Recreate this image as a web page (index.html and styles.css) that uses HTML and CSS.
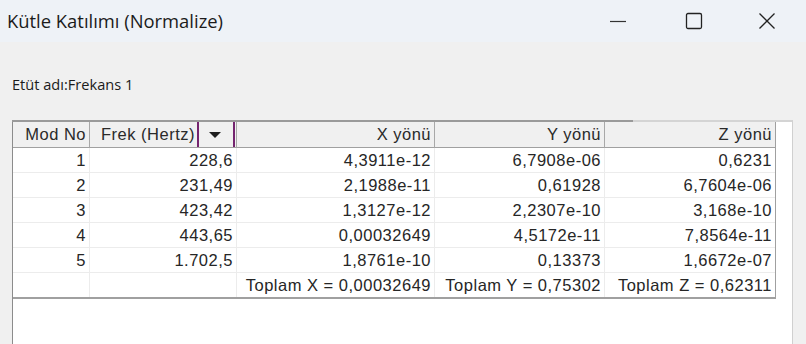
FILE: index.html
```html
<!DOCTYPE html>
<html lang="tr">
<head>
    <meta charset="UTF-8">
    <title>Kütle Katılımı (Normalize)</title>
    <link rel="stylesheet" href="styles.css">
</head>
<body>
    <div class="titlebar">
        <span class="title">Kütle Katılımı (Normalize)</span>
        <div class="controls">
            <span class="ctl">
                <svg width="18" height="18" viewBox="0 0 18 18"><path d="M1 9.5h16" stroke="#333" stroke-width="1.2" fill="none"/></svg>
            </span>
            <span class="ctl">
                <svg width="18" height="18" viewBox="0 0 18 18"><rect x="1.5" y="1.5" width="15" height="15" rx="1.5" stroke="#222" stroke-width="1.3" fill="none"/></svg>
            </span>
            <span class="ctl">
                <svg width="18" height="18" viewBox="0 0 18 18"><path d="M1.5 1.5l15 15M16.5 1.5l-15 15" stroke="#222" stroke-width="1.3" fill="none"/></svg>
            </span>
        </div>
    </div>

    <div class="info">Etüt adı:Frekans 1</div>

    <div class="panel">
        <div class="grid">
            <div class="hd">Mod No</div>
            <div class="hd hd-frek">
                <span>Frek (Hertz)</span>
                <span class="drop"><span class="tri"></span></span>
            </div>
            <div class="hd">X yönü</div>
            <div class="hd">Y yönü</div>
            <div class="hd">Z yönü</div>

            <div class="c">1</div><div class="c">228,6</div><div class="c">4,3911e-12</div><div class="c">6,7908e-06</div><div class="c">0,6231</div>
            <div class="c">2</div><div class="c">231,49</div><div class="c">2,1988e-11</div><div class="c">0,61928</div><div class="c">6,7604e-06</div>
            <div class="c">3</div><div class="c">423,42</div><div class="c">1,3127e-12</div><div class="c">2,2307e-10</div><div class="c">3,168e-10</div>
            <div class="c">4</div><div class="c">443,65</div><div class="c">0,00032649</div><div class="c">4,5172e-11</div><div class="c">7,8564e-11</div>
            <div class="c">5</div><div class="c">1.702,5</div><div class="c">1,8761e-10</div><div class="c">0,13373</div><div class="c">1,6672e-07</div>
            <div class="c"></div><div class="c"></div><div class="c">Toplam X = 0,00032649</div><div class="c">Toplam Y = 0,75302</div><div class="c">Toplam Z = 0,62311</div>
        </div>
    </div>
</body>
</html>
```

FILE: styles.css
```css
body {
    margin: 0;
    background: #f0f0f0;
    font-family: "Open Sans", sans-serif;
    color: #1b1b1b;
    height: 344px;
    overflow: hidden;
}
.titlebar {
    height: 42px;
    background: #eef2f7;
    display: flex;
    align-items: center;
    justify-content: space-between;
}
.title {
    padding-left: 7px;
    font-size: 18.4px;
    margin-top: -1px;
}
.controls {
    display: flex;
    align-items: center;
}
.ctl {
    width: 76px;
    height: 42px;
    display: flex;
    align-items: center;
    justify-content: center;
}
.ctl:last-child {
    width: 70px;
    margin-right: 4px;
}
.info {
    padding: 32px 0 0 12px;
    line-height: 20px;
    font-size: 14.6px;
}
.panel {
    position: relative;
    margin: 26px 0 0 12px;
    width: 779px;
    height: 222px;
    background: #ffffff;
    border-left: 1px solid #8c8c8c;
    border-right: 1px solid #d0d0d0;
    border-top: 2px solid #d4d4d4;
}
.panel::before {
    content: "";
    position: absolute;
    left: -1px;
    top: -2px;
    width: 621px;
    height: 2px;
    background: #9a9a9a;
}
.grid {
    display: grid;
    grid-template-columns: 77px 147px 198px 170px 170px;
    width: 762px;
    border-right: 1px solid #a0a0a0;
    border-bottom: 2px solid #a0a0a0;
    font-family: "Liberation Sans", Arial, sans-serif;
    font-size: 16.5px;
    letter-spacing: 0.5px;
}
.hd, .c {
    box-sizing: border-box;
    display: flex;
    align-items: center;
    justify-content: flex-end;
    padding-right: 3px;
    white-space: nowrap;
}
.hd {
    height: 26px;
    background: #f0f0f0;
    border-right: 1px solid #a8a8a8;
    border-bottom: 1px solid #a0a0a0;
    color: #2a2a2a;
}
.hd:nth-child(5) {
    border-right: none;
}
.c {
    height: 25px;
    border-right: 1px solid #ececec;
    border-bottom: 1px solid #ececec;
    color: #262626;
}
.c:nth-child(5n) {
    border-right: none;
}
.c:nth-last-child(-n+5) {
    border-bottom: none;
    height: 24px;
}
.hd-frek {
    padding-right: 1px;
    gap: 2px;
}
.drop {
    box-sizing: border-box;
    width: 38px;
    height: 100%;
    border-left: 2px solid #74246f;
    border-right: 2px solid #74246f;
    display: flex;
    align-items: center;
    justify-content: center;
}
.tri {
    width: 0;
    height: 0;
    border-left: 6px solid transparent;
    border-right: 6px solid transparent;
    border-top: 6px solid #1e1e1e;
    margin-left: -2px;
}
```
